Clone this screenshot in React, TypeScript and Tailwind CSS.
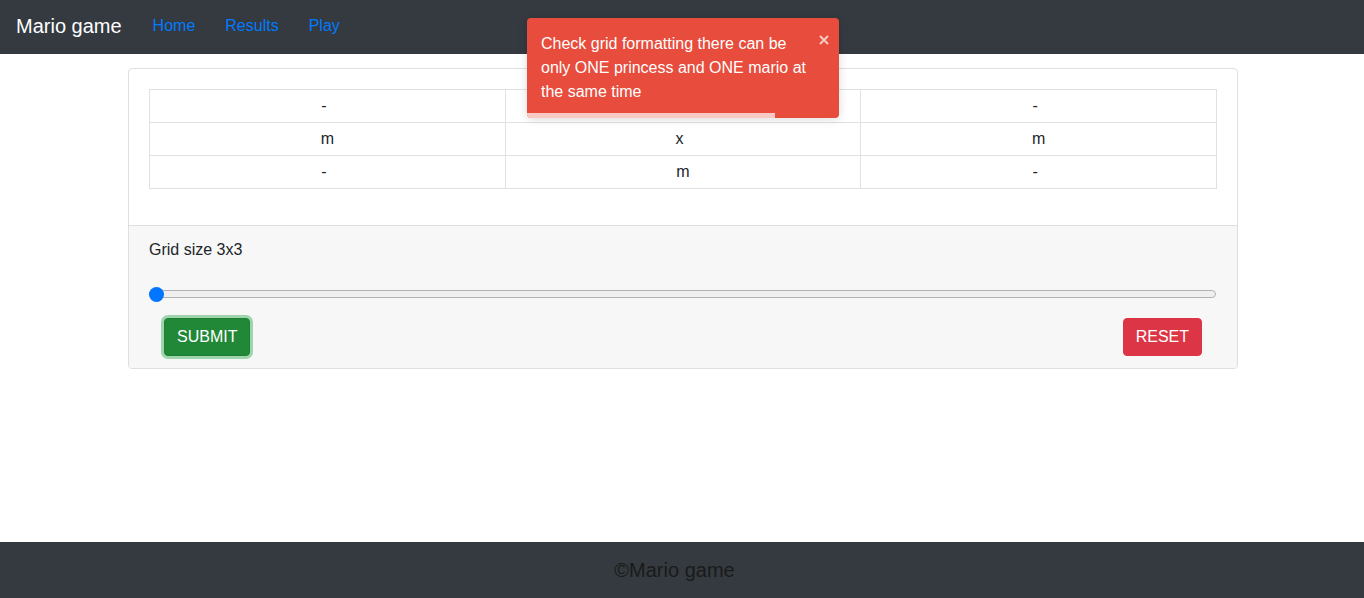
import React from "react";

const rows = [
  ["-", "-", "-"],
  ["m", "x", "m"],
  ["-", "m", "-"],
];

export default function App() {
  return (
    <div
      className="relative min-h-screen flex flex-col bg-white text-[#212529]"
      style={{ fontFamily: '"Liberation Sans", Arial, sans-serif' }}
    >
      <nav className="h-[54px] bg-[#343a40] flex items-center pb-[2px] px-[16px] shrink-0">
        <span className="text-[20px] leading-[30px] text-white mr-[16px]">Mario game</span>
        <a className="text-[16px] leading-6 text-[#007bff] px-[15px]">Home</a>
        <a className="text-[16px] leading-6 text-[#007bff] px-[15px]">Results</a>
        <a className="text-[16px] leading-6 text-[#007bff] px-[15px]">Play</a>
      </nav>

      <main className="flex-1 pt-[14px] flex justify-center pl-[2px]">
        <div className="w-[1110px] self-start border border-[#dfdfdf] rounded-[4px] overflow-hidden">
          <div className="p-[20px] pb-[36px]">
            <table className="w-full border-collapse table-fixed">
              <tbody>
                {rows.map((r, i) => (
                  <tr key={i}>
                    {r.map((c, j) => (
                      <td
                        key={j}
                        className="border border-[#dee2e6] py-[4px] text-center text-[16px] leading-6"
                      >
                        <span className={c === "m" ? "" : "pr-[7px]"}>{c}</span>
                      </td>
                    ))}
                  </tr>
                ))}
              </tbody>
            </table>
          </div>
          <div className="bg-[#f7f7f7] border-t border-[#dfdfdf] px-[20px] pt-[12px] pb-[12px]">
            <div className="text-[16px] leading-6">Grid size 3x3</div>
            <div className="relative h-[15px] mt-[25px]">
              <div className="absolute left-0 right-[1px] top-[3px] h-[8px] rounded-full border border-[#b2b2b2] bg-[#efefef]" />
              <div className="absolute left-0 top-0 w-[15px] h-[15px] rounded-full bg-[#0075ff]" />
            </div>
            <div className="flex justify-between px-[15px] mt-[16px]">
              <button className="h-[38px] px-[12px] rounded-[4px] bg-[#218838] border border-[#1e7e34] text-white text-[16px] leading-6 shadow-[0_0_0_3px_rgba(72,180,97,0.5)]">
                SUBMIT
              </button>
              <button className="h-[38px] px-[12px] rounded-[4px] bg-[#dc3545] border border-[#dc3545] text-white text-[16px] leading-6">
                RESET
              </button>
            </div>
          </div>
        </div>
      </main>

      <footer className="h-[56px] bg-[#343a40] flex items-center justify-center pr-[15px] shrink-0">
        <span className="text-[20px] leading-[30px] text-[#1a1a1a]">©Mario game</span>
      </footer>

      <div className="absolute left-[527px] top-[18px] w-[312px] bg-[#e74c3c] rounded-[4px] shadow-[0_1px_10px_rgba(0,0,0,0.15)] overflow-hidden">
        <div className="pt-[14px] pl-[14px] pr-[26px] pb-[14px] text-white text-[16px] leading-6">
          Check grid formatting there can be only ONE princess and ONE mario at the same time
        </div>
        <svg
          className="absolute top-[17px] right-[10px]"
          width="10"
          height="10"
          viewBox="0 0 10 10"
        >
          <path d="M1 1L9 9M9 1L1 9" stroke="rgba(255,255,255,0.7)" strokeWidth="2" />
        </svg>
        <div className="absolute left-0 bottom-0 h-[5px] w-[248px] bg-[rgba(255,255,255,0.7)]" />
      </div>
    </div>
  );
}
